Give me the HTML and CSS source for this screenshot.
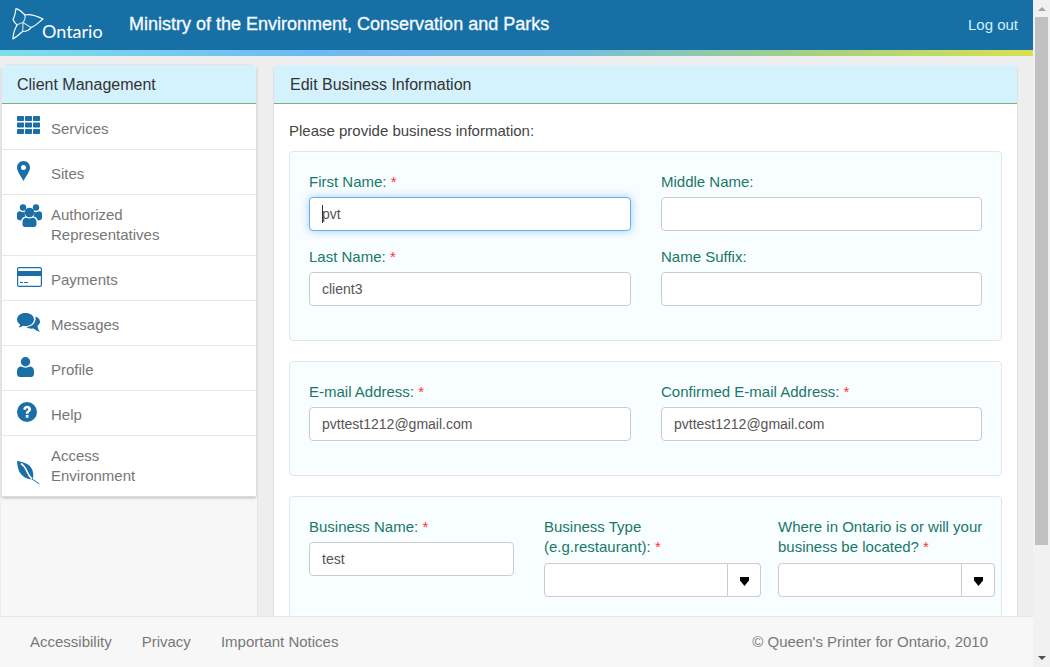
FILE: index.html
```html
<!DOCTYPE html>
<html lang="en">
<head>
<meta charset="utf-8">
<title>Edit Business Information</title>
<link rel="stylesheet" href="styles.css">
</head>
<body>
<div class="window">
  <div class="page">
    <header class="topbar">
      <div class="brand">
        <svg class="trillium" viewBox="0 0 36 34" width="36" height="34" aria-hidden="true">
          <g fill="none" stroke="#fff" stroke-width="1.200" stroke-linejoin="round" stroke-linecap="round">
            <path d="M6 1.500C9 2.500 12.500 5 15 8 20 6.500 27 9 33 12 29 15 25.500 19 21 20.500 19.500 23 16.500 24.500 12.500 24.500 9.500 27.500 6 30 3 32 3 27.500 4.500 22.500 7 18 5 16 3.500 14 3 12.500 4.500 10 5.500 5 6 1.500Z"/>
            <path d="M15 8C15.500 10.500 15 13 13 15.500 11 16 9 16.800 7 18" stroke-opacity=".75"/>
            <path d="M13 15.500C15.500 17 18 19 21 20.500M13 15.500C13 18.500 13 22 12.500 24.500" stroke-opacity=".75"/>
          </g>
        </svg>
        <span class="wordmark">Ontario</span>
      </div>
      <h1 class="ministry">Ministry of the Environment, Conservation and Parks</h1>
      <a class="logout">Log out</a>
    </header>
    <div class="stripe"></div>
    <div class="main">
      <aside class="sidebar">
        <div class="side-card">
          <div class="card-head">Client Management</div>
          <nav class="side-nav">
            <a class="nav-item">
              <svg class="ico ico-a" width="23" height="18" viewBox="0 0 23 18"><g fill="#1a6fa6"><rect width="7" height="5" rx=".8"/><rect x="8" width="7" height="5" rx=".8"/><rect x="16" width="7" height="5" rx=".8"/><rect y="6.500" width="7" height="5" rx=".8"/><rect x="8" y="6.500" width="7" height="5" rx=".8"/><rect x="16" y="6.500" width="7" height="5" rx=".8"/><rect y="13" width="7" height="5" rx=".8"/><rect x="8" y="13" width="7" height="5" rx=".8"/><rect x="16" y="13" width="7" height="5" rx=".8"/></g></svg>
              <span class="nav-text">Services</span>
            </a>
            <a class="nav-item">
              <svg class="ico ico-a" width="13" height="20" viewBox="0 0 13 20"><path fill="#1a6fa6" fill-rule="evenodd" d="M6.500 0C10.100 0 13 2.900 13 6.500 13 10.500 8.500 16 6.500 20 4.500 16 0 10.500 0 6.500 0 2.900 2.900 0 6.500 0ZM6.500 4A2.500 2.500 0 1 0 6.500 9 2.500 2.500 0 1 0 6.500 4Z"/></svg>
              <span class="nav-text">Sites</span>
            </a>
            <a class="nav-item">
              <svg class="ico ico-b" width="25" height="23" viewBox="0 0 25 23"><g fill="#1a6fa6"><circle cx="6" cy="3.500" r="3.200"/><circle cx="19" cy="3.500" r="3.200"/><path d="M0 10C0 8 2 7 3.500 7.500 5 8.300 7 8.300 8 7.800 7.500 9.500 7.800 11 8.500 12.500 6 13 4.500 14.500 4.200 16.500 1.500 16.500 0 15.500 0 14ZM25 10C25 8 23 7 21.500 7.500 20 8.300 18 8.300 17 7.800 17.500 9.500 17.200 11 16.500 12.500 19 13 20.500 14.500 20.800 16.500 23.500 16.500 25 15.500 25 14Z"/><circle cx="12.500" cy="8.500" r="4.800"/><path d="M5.500 18C5.500 15.500 7.500 13.500 9.500 13.800 11.500 14.800 13.500 14.800 15.500 13.800 17.500 13.500 19.500 15.500 19.500 18V20.500C19.500 22 18.500 23 17 23H8C6.500 23 5.500 22 5.500 20.500Z"/></g></svg>
              <span class="nav-text nav-text-multi">Authorized<br>Representatives</span>
            </a>
            <a class="nav-item">
              <svg class="ico ico-a" width="25" height="20" viewBox="0 0 25 20"><rect x=".6" y=".6" width="23.800" height="18.800" rx="1.500" fill="#fff" stroke="#1a6fa6" stroke-width="1.200"/><rect x="1" y="4" width="23" height="5" fill="#1a6fa6"/><rect x="3" y="15" width="3" height="1" fill="#1a6fa6"/><rect x="7" y="15" width="4" height="1" fill="#1a6fa6"/></svg>
              <span class="nav-text">Payments</span>
            </a>
            <a class="nav-item">
              <svg class="ico ico-c" width="23" height="19" viewBox="0 0 23 19"><g fill="#1a6fa6"><path d="M8.500 0C13.200 0 17 2.700 17 6.500S13.200 13 8.500 13C7.500 13 6.800 13 6 12.700 4.500 13.800 3 14.300 1.500 14.500 2.500 13.500 3 12.500 3.200 11.400 1.200 10.300 0 8.500 0 6.500 0 2.700 3.800 0 8.500 0Z"/><path d="M18.500 3.500C21.200 4.500 23 6.300 23 8.800 23 10.500 21.800 12 20.500 12.800 20.700 14.500 21.500 17.500 23 19 20.500 18.500 18 17 16.700 15.600 13.500 16 10.800 15.300 9.500 14 14 14 19.500 10.500 18.500 3.500Z"/></g></svg>
              <span class="nav-text">Messages</span>
            </a>
            <a class="nav-item">
              <svg class="ico ico-a" width="17" height="20" viewBox="0 0 17 20"><g fill="#1a6fa6"><circle cx="8.500" cy="4.700" r="4.700"/><path d="M0 14C0 11 2 9.500 4 9.500 6.500 11 10.500 11 13 9.500 15 9.500 17 11 17 14V17C17 19 15.500 20 14 20H3C1.500 20 0 19 0 17Z"/></g></svg>
              <span class="nav-text">Profile</span>
            </a>
            <a class="nav-item">
              <svg class="ico ico-a" width="20" height="20" viewBox="0 0 20 20"><circle cx="10" cy="10" r="10" fill="#1a6fa6"/><path d="M6.300 7.400C6.500 5 8.200 3.800 10.200 3.800 12.300 3.800 14 5.200 14 7.200 14 9.800 11.400 9.900 11.400 11.700H8.800C8.800 8.800 11.300 8.700 11.300 7.300 11.300 6.600 10.800 6.200 10.100 6.200 9.300 6.200 8.900 6.800 8.700 7.900Z" fill="#fff"/><rect x="8.800" y="13" width="2.700" height="2.700" fill="#fff"/></svg>
              <span class="nav-text">Help</span>
            </a>
            <a class="nav-item nav-last">
              <svg class="ico ico-d" width="23" height="23" viewBox="0 0 23 23"><path fill="#1a6fa6" d="M0 0C5 .5 11 2.500 14 6.500 16.500 10 16.800 14.500 15.500 18.500 10 18.500 5 15.500 2.500 11 .7 7.500 .3 3.500 0 0Z"/><path d="M4 2.500C7.500 4.500 8.500 7.500 10 10.500 11 13 12.500 15.500 15 18" fill="none" stroke="#fff" stroke-width="1.600"/><path d="M15 18L22.500 23" stroke="#1a6fa6" stroke-width="1" fill="none"/></svg>
              <span class="nav-text nav-text-multi">Access<br>Environment</span>
            </a>
          </nav>
        </div>
      </aside>
      <section class="panel">
        <div class="card-head panel-head">Edit Business Information</div>
        <div class="panel-body">
          <p class="intro">Please provide business information:</p>
          <div class="box box-name">
            <div class="two-col">
              <div class="field">
                <label class="label">First Name: <span class="req">*</span></label>
                <div class="focus-wrap"><input class="input input-focus" type="text" value="pvt"><span class="caret"></span></div>
              </div>
              <div class="field">
                <label class="label">Middle Name:</label>
                <input class="input" type="text">
              </div>
              <div class="field">
                <label class="label">Last Name: <span class="req">*</span></label>
                <input class="input" type="text" value="client3">
              </div>
              <div class="field">
                <label class="label">Name Suffix:</label>
                <input class="input" type="text">
              </div>
            </div>
          </div>
          <div class="box box-mail">
            <div class="two-col">
              <div class="field">
                <label class="label">E-mail Address: <span class="req">*</span></label>
                <input class="input" type="text" value="pvttest1212@gmail.com">
              </div>
              <div class="field">
                <label class="label">Confirmed E-mail Address: <span class="req">*</span></label>
                <input class="input" type="text" value="pvttest1212@gmail.com">
              </div>
            </div>
          </div>
          <div class="box box-biz">
            <div class="biz-row">
              <div class="field biz-name">
                <label class="label">Business Name: <span class="req">*</span></label>
                <input class="input" type="text" value="test">
              </div>
              <div class="field biz-select">
                <label class="label">Business Type<br>(e.g.restaurant): <span class="req">*</span></label>
                <div class="combo"><input class="input combo-input" type="text"><button class="combo-btn" type="button"><svg width="9" height="9" viewBox="0 0 9 9"><path d="M0 0H9V3.500L4.500 9 0 3.500Z" fill="#000"/></svg></button></div>
              </div>
              <div class="field biz-select">
                <label class="label">Where in Ontario is or will your<br>business be located? <span class="req">*</span></label>
                <div class="combo"><input class="input combo-input" type="text"><button class="combo-btn" type="button"><svg width="9" height="9" viewBox="0 0 9 9"><path d="M0 0H9V3.500L4.500 9 0 3.500Z" fill="#000"/></svg></button></div>
              </div>
            </div>
          </div>
        </div>
      </section>
    </div>
    <footer class="footer">
      <div class="foot-links"><a>Accessibility</a><a>Privacy</a><a>Important Notices</a></div>
      <div class="copyright">© Queen's Printer for Ontario, 2010</div>
    </footer>
  </div>
  <div class="scrollbar">
    <span class="arrow arrow-up"></span>
    <div class="track"><div class="thumb"></div></div>
    <span class="arrow arrow-down"></span>
  </div>
</div>
</body>
</html>
```

FILE: styles.css
```css
* { box-sizing: border-box; }
html, body { margin: 0; height: 100%; overflow: hidden; }
body { font-family: "Liberation Sans", Arial, sans-serif; font-size: 15px; color: #333; background: #eee; }

.window { display: flex; height: 667px; width: 1050px; }
.page { position: relative; width: 1033px; height: 667px; display: flex; flex-direction: column; overflow: hidden; background: #eee; }

.topbar { height: 50px; flex: none; background: #166fa5; display: flex; align-items: flex-start; color: #fff; }
.brand { width: 129px; flex: none; position: relative; height: 50px; }
.trillium { position: absolute; left: 10px; top: 7px; }
.wordmark { position: absolute; left: 42px; top: 20px; font-family: Lato, sans-serif; font-weight: 400; font-size: 18px; line-height: 22px; color: #fff; }
.ministry { margin: 13px 0 0; font-size: 18px; line-height: 22px; font-weight: 400; -webkit-text-stroke: .35px #f4fafd; flex: 1; color: #f4fafd; }
.logout { margin: 15px 15px 0 0; font-size: 15px; line-height: 20px; color: #d4f1fd; }
.stripe { height: 6px; flex: none; background: linear-gradient(90deg, #7fdfe8 0%, #6db9f2 30%, #72bfe0 55%, #a8d27e 80%, #d6e14f 100%); }

.main { flex: 1; display: flex; align-items: stretch; padding: 9px 0 0 1px; gap: 15px; min-height: 0; }
.sidebar { width: 257px; flex: none; background: #f7f7f7; border-right: 1px solid #e6e6e6; padding-left: 1px; margin-bottom: -60px; }
.side-card { width: 254px; background: #fff; border-radius: 4px 4px 0 0; box-shadow: 0 1px 3px rgba(0,0,0,.25); }
.card-head { height: 39px; background: #d4f1fe; border-bottom: 1px solid #7fb17f; padding: 10px 15px 0; font-size: 16px; line-height: 20px; color: #333; border-radius: 4px 4px 0 0; }
.side-nav { padding-top: 1px; }
.nav-item { position: relative; display: flex; align-items: flex-start; min-height: 45px; padding: 10px 0 10px 15px; border-bottom: 1px solid #e6e6e6; color: #777; font-size: 15px; line-height: 20px; }
.nav-item:has(.nav-text-multi) { min-height: 61px; }
.nav-last { border-bottom: 1px solid #ddd; }
.ico { flex: none; display: block; }
.ico-a { margin-top: 1px; }
.ico-b { margin-top: -1px; }
.ico-c { margin-top: 2px; }
.ico-d { margin-top: 15px; }
.nav-text { position: absolute; left: 49px; margin-top: 4px; }
.nav-text-multi { margin-top: 0; }

.panel { width: 745px; flex: none; background: #fff; border: 1px solid #e0e0e0; border-top: 0; border-radius: 4px 4px 0 0; margin-bottom: -60px; overflow: hidden; }
.panel-head { padding-left: 16px; }
.panel-body { padding: 17px 15px 0; }
.intro { margin: 0 0 10px; line-height: 20px; font-size: 15px; color: #444; }

.box { background: #f8fdff; border: 1px solid #e2e6e8; border-radius: 4px; padding: 20px 19px 0; margin-bottom: 20px; }
.box-name { height: 190px; }
.box-mail { height: 115px; }
.box-biz { height: 180px; padding-right: 6px; }
.two-col { display: grid; grid-template-columns: 322px 321px; column-gap: 30px; }
.field { display: flex; flex-direction: column; min-width: 0; }
.two-col .field { height: 75px; }
.label { display: block; color: #1a7868; font-size: 15px; line-height: 20px; margin-bottom: 5px; }
.req { color: #f33; }

.input { display: block; width: 100%; height: 34px; border: 1px solid #ccc; border-radius: 4px; background: #fff; padding: 0 12px; font: 14px "Liberation Sans", Arial, sans-serif; color: #555; outline: none; }
.focus-wrap { position: relative; }
.input-focus { border-color: #66afe9; box-shadow: 0 0 8px rgba(102,175,233,.6); }
.caret { position: absolute; left: 13px; top: 8px; width: 1px; height: 18px; background: #333; }

.biz-row { display: flex; }
.biz-name { width: 205px; margin-right: 30px; }
.biz-select { width: 217px; margin-right: 17px; }
.biz-select:last-child { margin-right: 0; }
.biz-select .label { margin-bottom: 6px; white-space: nowrap; }
.combo { display: flex; }
.combo-input { flex: 1; min-width: 0; border-radius: 4px 0 0 4px; }
.combo-btn { width: 33px; height: 34px; flex: none; display: flex; align-items: center; justify-content: center; border: 1px solid #ccc; border-left: 0; border-radius: 0 4px 4px 0; background: #fff; padding: 2px 0 0; }

.footer { position: absolute; left: 0; right: 0; bottom: 0; height: 51px; background: #f7f7f7; border-top: 1px solid #e4e4e4; display: flex; justify-content: space-between; align-items: center; padding: 0 45px 2px 30px; color: #777; font-size: 15px; }
.foot-links { display: flex; gap: 30px; }

.scrollbar { width: 17px; flex: none; background: #f1f1f1; display: flex; flex-direction: column; align-items: center; height: 667px; padding-left: 1px; }
.track { flex: 1; width: 100%; }
.thumb { height: 528px; width: 13px; background: #c1c1c1; margin-left: 1px; }
.arrow { width: 0; height: 0; flex: none; border-left: 4px solid transparent; border-right: 4px solid transparent; }
.arrow-up { border-bottom: 4px solid #a3a3a3; margin: 7px 0 6px; }
.arrow-down { border-top: 4px solid #505050; margin: 6px 0 7px; }
```
